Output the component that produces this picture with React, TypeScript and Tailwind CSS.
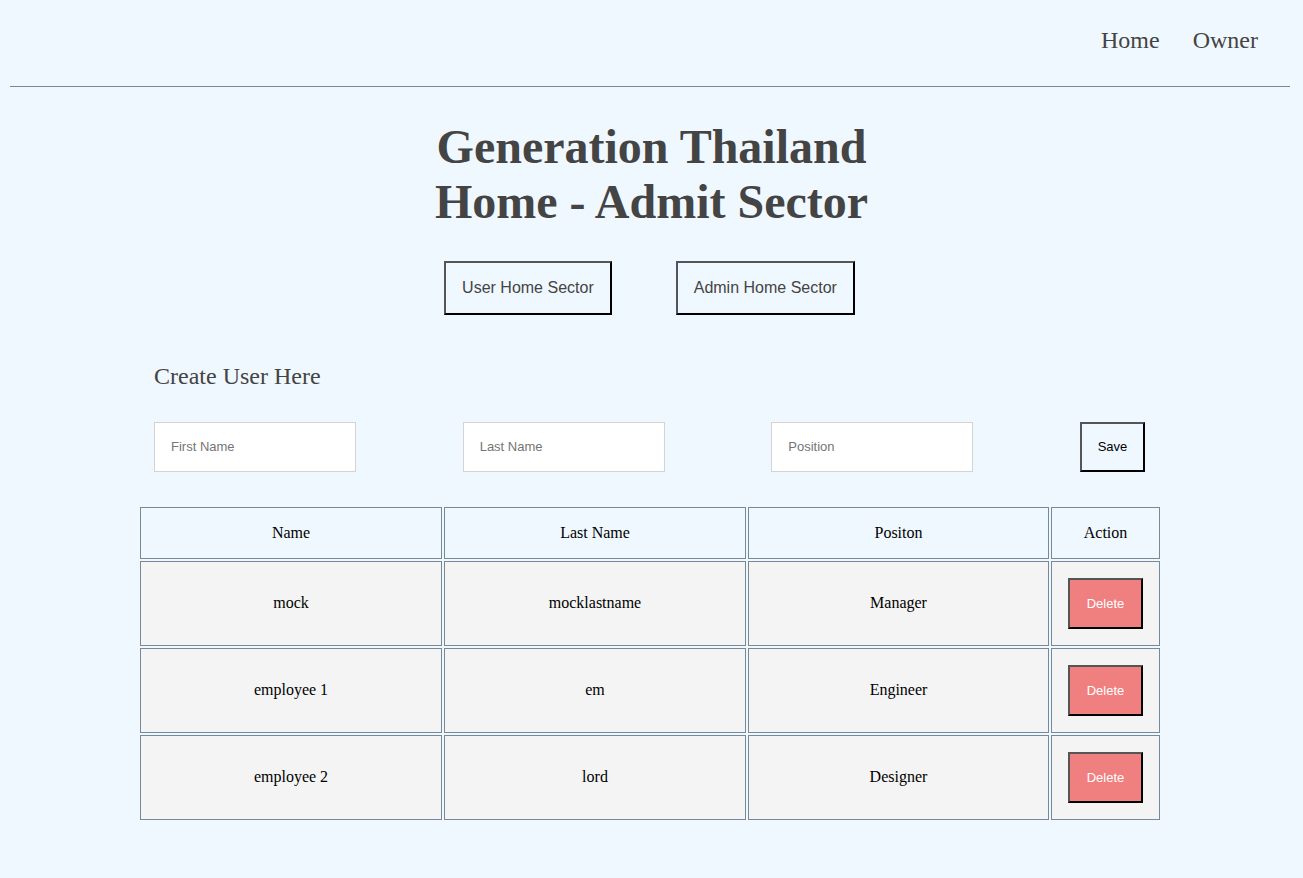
import React from 'react'

type Employee = {
  id: number
  name: string
  lastname: string
  position: string
}

const employees: Employee[] = [
  { id: 1, name: 'mock', lastname: 'mocklastname', position: 'Manager' },
  { id: 2, name: 'employee 1', lastname: 'em', position: 'Engineer' },
  { id: 3, name: 'employee 2', lastname: 'lord', position: 'Designer' },
]

const serif = "font-['Liberation_Serif','Times_New_Roman',serif]"
const sans = "font-['Liberation_Sans',Arial,sans-serif]"
const outset = 'border-2 border-t-[#555] border-l-[#555] border-b-black border-r-black'

export default function App() {
  return (
    <div className={`min-h-screen bg-[#f0f8ff] ${serif} text-[#444]`}>
      {/* Navbar */}
      <nav className="h-[86px] flex justify-end gap-[33px] pt-[27px] pr-[45px] text-[24px] leading-[1.15]">
        <a>Home</a>
        <a>Owner</a>
      </nav>
      <div className="ml-[10px] w-[1280px] h-px bg-[#778899]" />

      <h1 className="mt-[32px] text-center text-[48px] font-bold leading-[1.15]">
        Generation Thailand
        <br />
        Home - Admit Sector
      </h1>

      <div className="mt-[32px] flex justify-center gap-[64px] pr-[4px]">
        <button className={`${outset} ${sans} px-4 h-[54px] text-[16px] text-[#444] bg-transparent`}>
          User Home Sector
        </button>
        <button className={`${outset} ${sans} px-4 h-[54px] text-[16px] text-[#444] bg-transparent`}>
          Admin Home Sector
        </button>
      </div>

      <div className="ml-[138px] w-[1024px]">
        <h2 className="mt-[48px] ml-[16px] text-[24px] leading-[1.15]">Create User Here</h2>

        <form className="mt-[31px] ml-[16px] w-[991px] flex justify-between items-center">
          <input
            placeholder="First Name"
            className={`${sans} w-[202px] h-[50px] bg-white border border-[#d3d3d3] pl-4 text-[13px] text-black placeholder:text-[#757575] outline-none`}
          />
          <input
            placeholder="Last Name"
            className={`${sans} w-[202px] h-[50px] bg-white border border-[#d3d3d3] pl-4 text-[13px] text-black placeholder:text-[#757575] outline-none`}
          />
          <input
            placeholder="Position"
            className={`${sans} w-[202px] h-[50px] bg-white border border-[#d3d3d3] pl-4 text-[13px] text-black placeholder:text-[#757575] outline-none`}
          />
          <button type="button" className={`${outset} ${sans} w-[65px] h-[50px] text-[13px] text-black bg-transparent`}>
            Save
          </button>
        </form>

        <table className="mt-[33px] w-[1024px] table-fixed border-separate border-spacing-[2px] text-[16px] text-black">
          <colgroup>
            <col className="w-[302px]" />
            <col className="w-[302px]" />
            <col className="w-[301px]" />
            <col className="w-[109px]" />
          </colgroup>
          <thead>
            <tr className="h-[52px]">
              <th className="border border-[#778899] font-normal">Name</th>
              <th className="border border-[#778899] font-normal">Last Name</th>
              <th className="border border-[#778899] font-normal">Positon</th>
              <th className="border border-[#778899] font-normal">Action</th>
            </tr>
          </thead>
          <tbody>
            {employees.map((emp) => (
              <tr key={emp.id} className="h-[85px] bg-[#f4f4f4]">
                <td className="border border-[#778899] text-center">{emp.name}</td>
                <td className="border border-[#778899] text-center">{emp.lastname}</td>
                <td className="border border-[#778899] text-center">{emp.position}</td>
                <td className="border border-[#778899] text-center">
                  <button className={`${outset} ${sans} w-[75px] h-[51px] bg-[#f08080] text-white text-[13px]`}>
                    Delete
                  </button>
                </td>
              </tr>
            ))}
          </tbody>
        </table>
      </div>
    </div>
  )
}
